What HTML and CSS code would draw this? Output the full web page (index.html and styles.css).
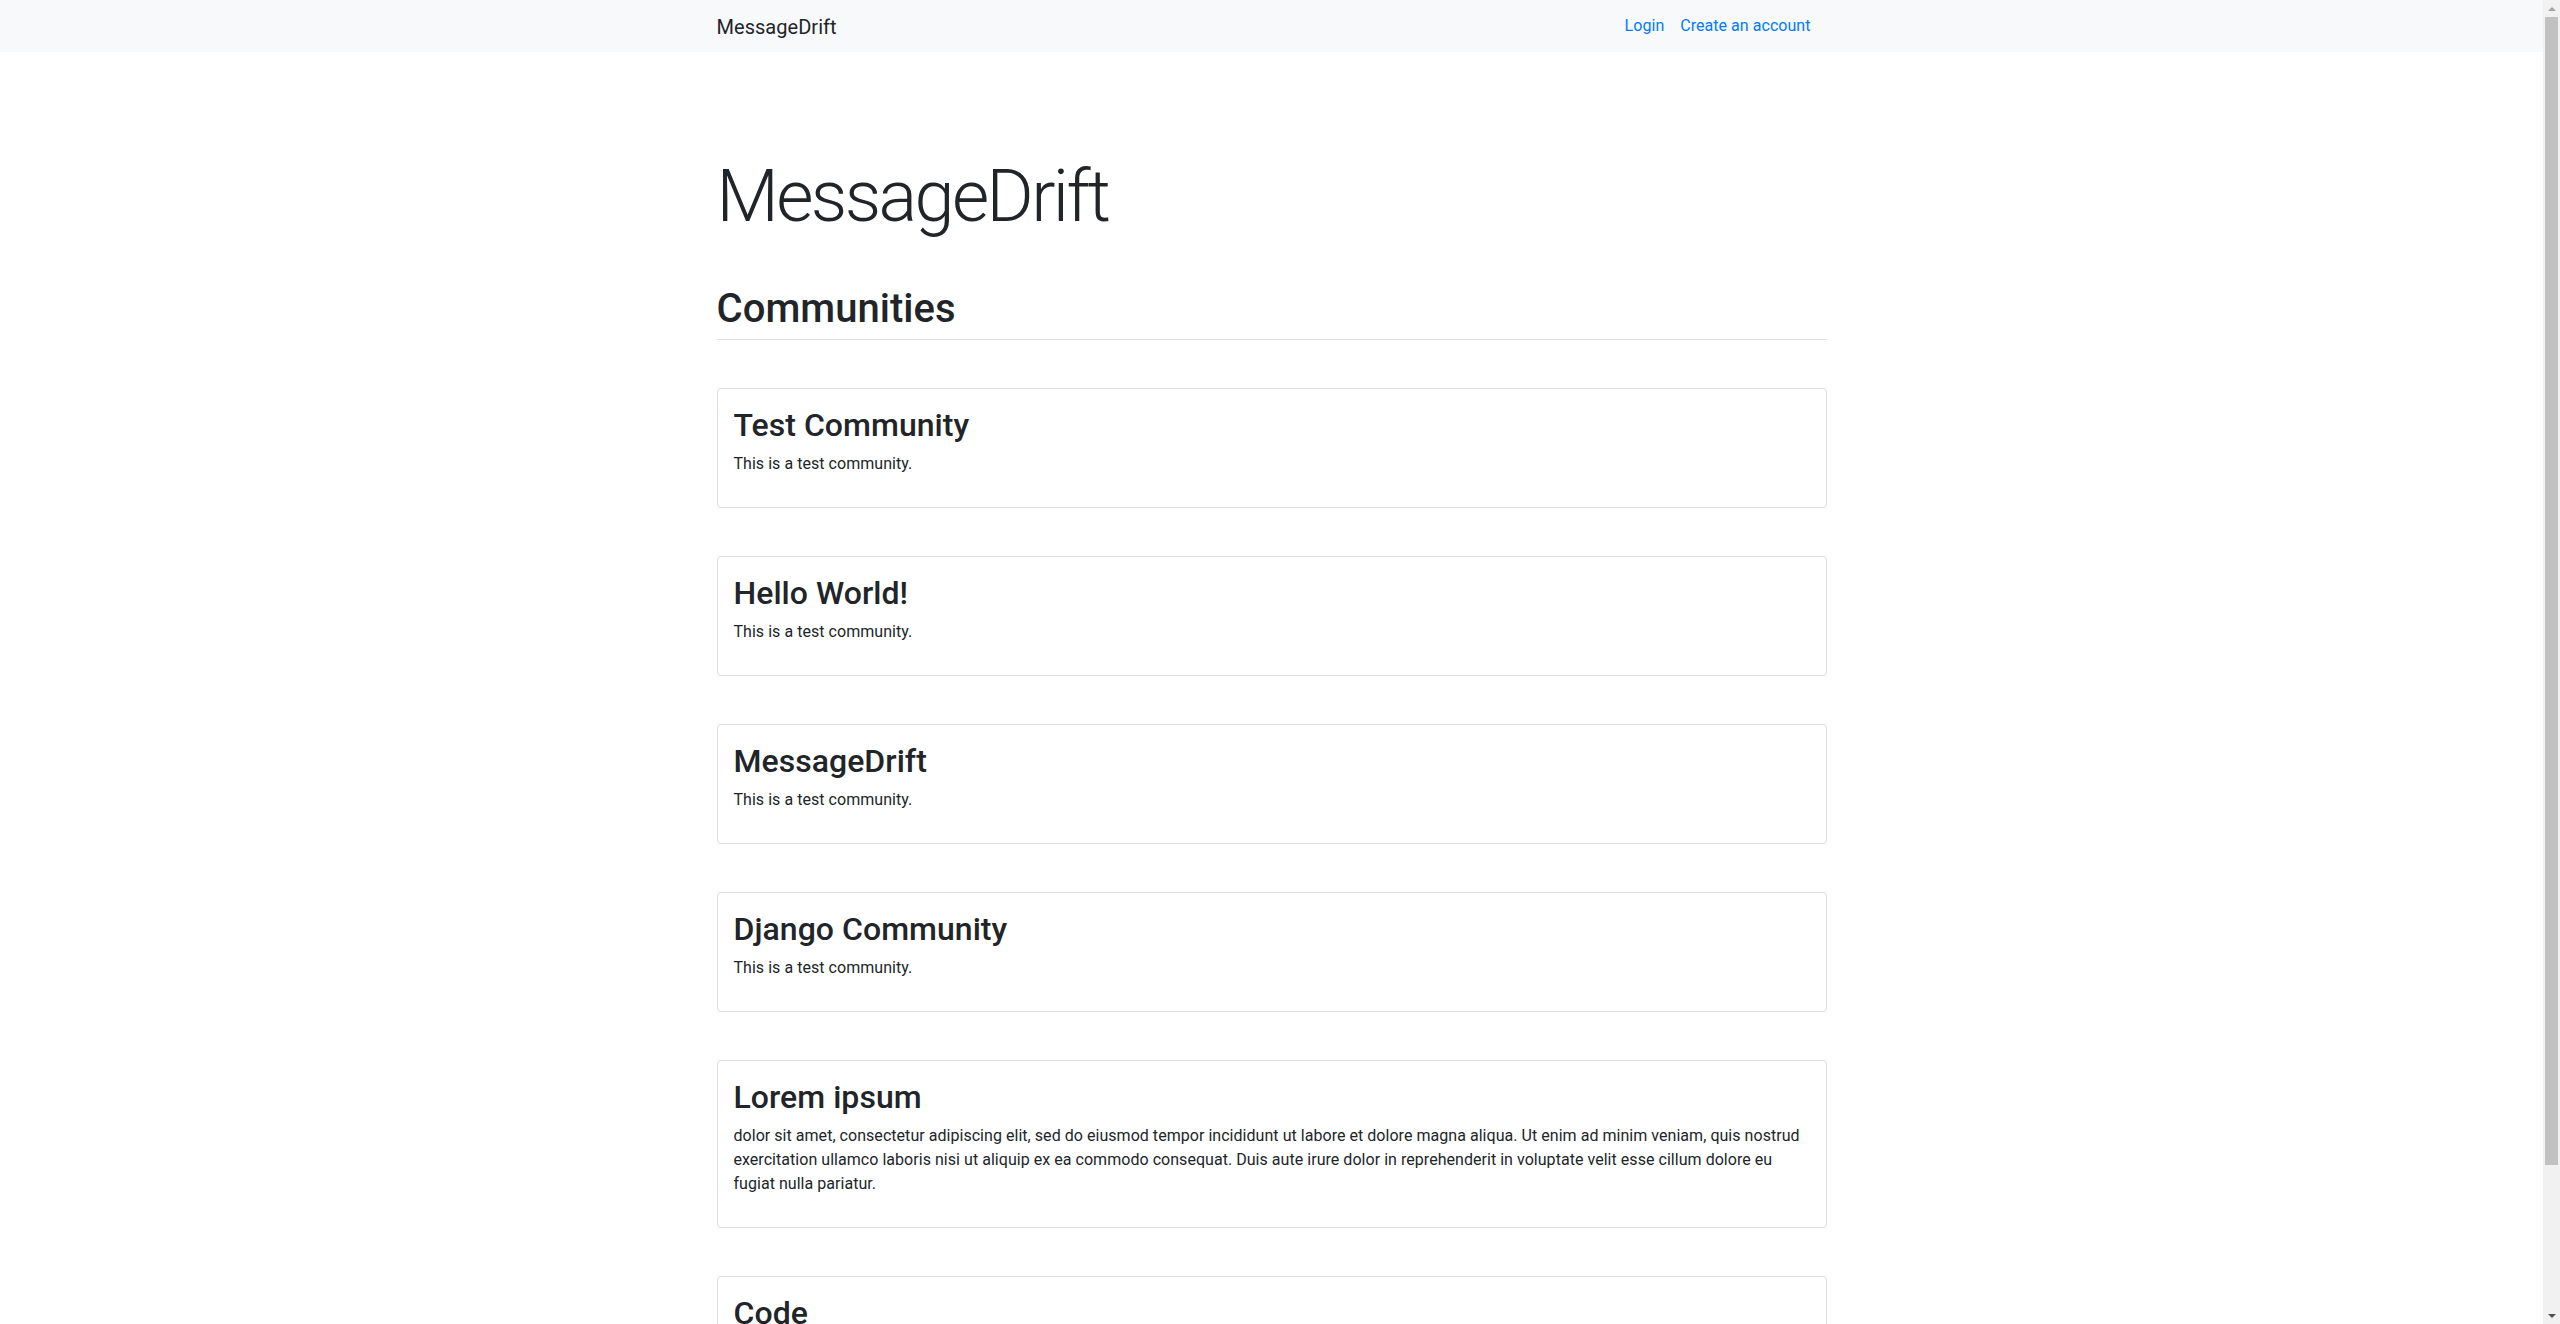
FILE: index.html
```html
<!DOCTYPE html>
<html lang="en">
<head>
<meta charset="utf-8">
<title>MessageDrift</title>
<link rel="stylesheet" href="styles.css">
</head>
<body>
<nav class="navbar">
  <div class="container navbar-inner">
    <a class="brand" href="#">MessageDrift</a>
    <ul class="nav-links">
      <li><a class="nav-link" href="#">Login</a></li>
      <li><a class="nav-link" href="#">Create an account</a></li>
    </ul>
  </div>
</nav>

<main class="container main">
  <h1 class="display">MessageDrift</h1>
  <div class="section-head">
    <h1 class="section-title">Communities</h1>
  </div>

  <div class="card">
    <h2 class="card-title">Test Community</h2>
    <p class="card-text">This is a test community.</p>
  </div>

  <div class="card">
    <h2 class="card-title">Hello World!</h2>
    <p class="card-text">This is a test community.</p>
  </div>

  <div class="card">
    <h2 class="card-title">MessageDrift</h2>
    <p class="card-text">This is a test community.</p>
  </div>

  <div class="card">
    <h2 class="card-title">Django Community</h2>
    <p class="card-text">This is a test community.</p>
  </div>

  <div class="card">
    <h2 class="card-title">Lorem ipsum</h2>
    <p class="card-text">dolor sit amet, consectetur adipiscing elit, sed do eiusmod tempor incididunt ut labore et dolore magna aliqua. Ut enim ad minim veniam, quis nostrud exercitation ullamco laboris nisi ut aliquip ex ea commodo consequat. Duis aute irure dolor in reprehenderit in voluptate velit esse cillum dolore eu fugiat nulla pariatur.</p>
  </div>

  <div class="card">
    <h2 class="card-title">Code</h2>
    <p class="card-text">A community about code.</p>
  </div>
</main>

<div class="scrollbar" aria-hidden="true">
  <span class="sb-arrow sb-up"></span>
  <div class="sb-track">
    <div class="sb-thumb"></div>
  </div>
  <span class="sb-arrow sb-down"></span>
</div>
</body>
</html>
```

FILE: styles.css
```css
* { box-sizing: border-box; }

html, body {
  margin: 0;
  padding: 0;
}

body {
  font-family: Roboto, "Liberation Sans", sans-serif;
  font-size: 16px;
  line-height: 1.5;
  font-weight: 400;
  color: #212529;
  background: #fff;
  letter-spacing: 0.04px;
  padding-right: 17px;
}

a { text-decoration: none; }

.container {
  width: 100%;
  max-width: 1140px;
  padding: 0 15px;
  margin: 0 auto;
}

/* Navbar */
.navbar {
  background: #f8f9fa;
  height: 52px;
}

.navbar-inner {
  height: 52px;
  display: flex;
  align-items: center;
  justify-content: space-between;
}

.brand {
  font-size: 20px;
  line-height: 30px;
  color: #212529;
  padding-top: 2px;
}

.nav-links {
  list-style: none;
  margin: 0;
  padding: 0 8px 0 0;
  display: flex;
}

.nav-link {
  display: block;
  padding: 0 8px;
  color: #007bff;
  font-size: 16px;
  line-height: 24px;
}

/* Main */
.main {
  padding-top: 102px;
  padding-bottom: 40px;
}

.display {
  font-size: 72px;
  font-weight: 300;
  line-height: 1.2;
  letter-spacing: -2.6px;
  margin: 0 0 45px;
}

.section-head {
  border-bottom: 1px solid #dee2e6;
  padding-bottom: 6px;
  margin-bottom: 48px;
}

.section-title {
  font-size: 40px;
  font-weight: 500;
  line-height: 1.2;
  margin: 0;
}

.card {
  border: 1px solid rgba(0, 0, 0, 0.125);
  border-radius: 4px;
  padding: 17px 16px 15.6px;
  margin-bottom: 48px;
  background: #fff;
}

.card-title {
  font-size: 32px;
  font-weight: 500;
  line-height: 1.2;
  margin: 0 0 7px;
}

.card-text {
  margin: 0 0 16px;
}

/* Fake classic scrollbar (overlays the right edge of the viewport) */
.scrollbar {
  position: fixed;
  top: 0;
  right: 0;
  width: 17px;
  height: 100vh;
  background: #f1f1f1;
  display: flex;
  flex-direction: column;
  align-items: center;
}

.sb-arrow {
  flex: 0 0 17px;
  width: 17px;
  display: flex;
  align-items: center;
  justify-content: center;
}

.sb-arrow::before {
  content: "";
  width: 0;
  height: 0;
  border-left: 4px solid transparent;
  border-right: 4px solid transparent;
}

.sb-up::before {
  border-bottom: 4px solid #a3a3a3;
}

.sb-down::before {
  border-top: 4px solid #505050;
}

.sb-track {
  flex: 1;
  width: 100%;
  padding: 0 2px;
  display: flex;
  flex-direction: column;
}

.sb-thumb {
  height: 89%;
  background: #c1c1c1;
}
```
